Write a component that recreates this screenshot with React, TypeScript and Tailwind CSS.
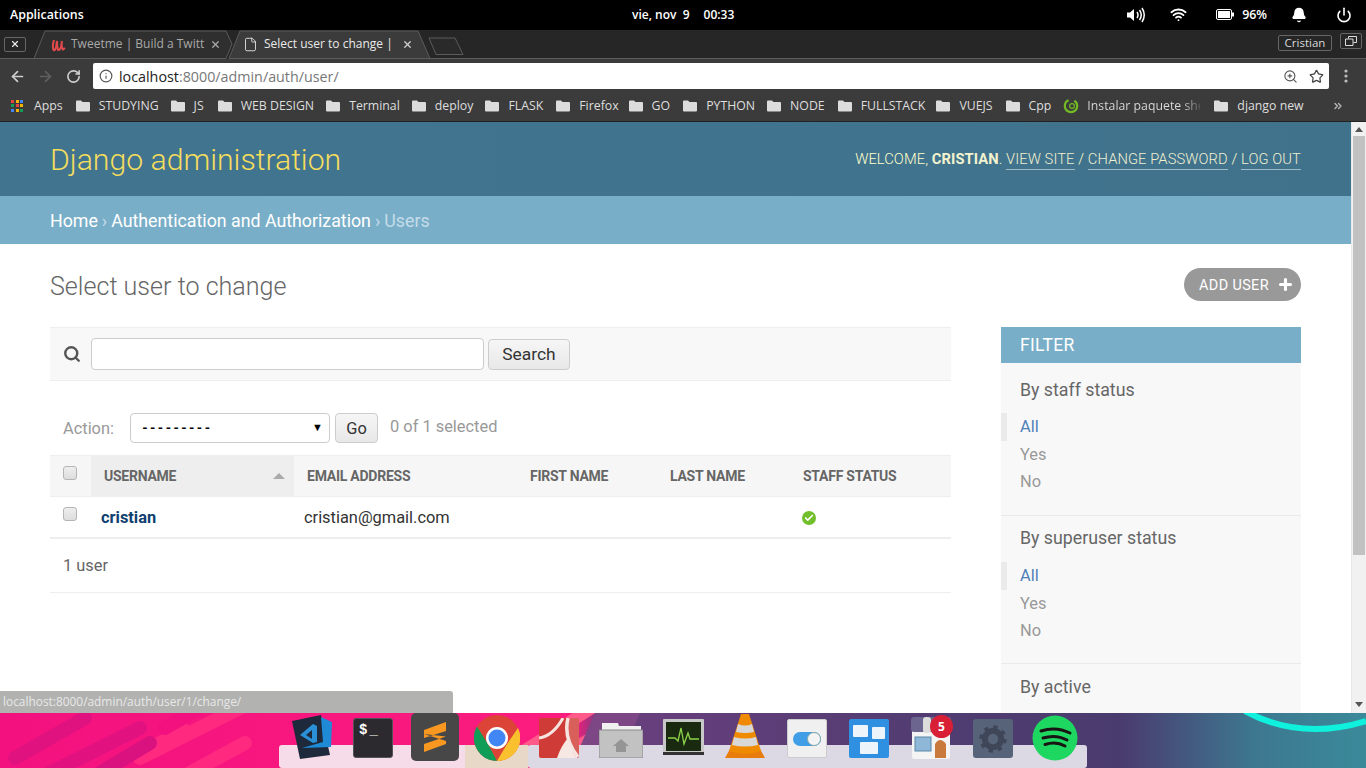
import { ArrowLeft, ArrowRight, RotateCw, Info, ZoomIn, Star, Wifi, Power, Bell, X, File, Search, Plus, Check, ChevronsRight } from "lucide-react";

const chrome = "font-['Open_Sans','Noto_Sans',sans-serif]";

function Folder() {
  return (
    <svg width="14" height="12" viewBox="0 0 14 12" className="shrink-0">
      <path d="M0 1.5 Q0 0.5 1 0.5 H5 L6.5 2 H13 Q14 2 14 3 V10.5 Q14 11.5 13 11.5 H1 Q0 11.5 0 10.5 Z" fill="#dcdcdc" />
    </svg>
  );
}

function AppsGrid() {
  const c = ["#e8453c", "#f4b400", "#4285f4", "#0f9d58", "#e8453c", "#f4b400", "#4285f4", "#f4b400", "#0f9d58"];
  return (
    <div className="grid grid-cols-3 gap-px w-[13px] h-[13px] shrink-0">
      {c.map((col, i) => (
        <span key={i} className="w-[3px] h-[3px]" style={{ background: col }} />
      ))}
    </div>
  );
}

const marks: [string, string][] = [
  ["STUDYING", "mr-[12px]"],
  ["JS", "mr-[14px]"],
  ["WEB DESIGN", "mr-[12px]"],
  ["Terminal", "mr-[12px]"],
  ["deploy", "mr-[12px]"],
  ["FLASK", "mr-[13px]"],
  ["Firefox", "mr-[10px]"],
  ["GO", "mr-[13px]"],
  ["PYTHON", "mr-[12px]"],
  ["NODE", "mr-[13px]"],
  ["FULLSTACK", "mr-[11px]"],
  ["VUEJS", "mr-[13px]"],
  ["Cpp", "mr-[12px]"],
];

function TopBar() {
  return (
    <div className={`h-[30px] bg-black text-white flex items-center relative shrink-0 text-[12.4px] font-semibold ${chrome}`}>
      <span className="ml-[10px]">Applications</span>
      <div className="absolute left-[632px] top-[6px] flex gap-[12px] whitespace-nowrap text-[12px]">
        <span className="whitespace-pre">vie, nov  9</span>
        <span className="ml-[2px]">00:33</span>
      </div>
      <div className="ml-auto flex items-center">
        <svg width="20" height="16" viewBox="0 0 20 16" className="mr-[24px]">
          <path d="M1 5.5 H4 L8 2 V14 L4 10.5 H1 Z" fill="#fff" />
          <path d="M11 5 Q13 8 11 11 M13.5 3 Q17 8 13.5 13 M16 1 Q20.5 8 16 15" stroke="#fff" strokeWidth="1.5" fill="none" />
        </svg>
        <Wifi size={17} strokeWidth={2.6} className="mr-[29px]" />
        <svg width="18" height="11" viewBox="0 0 18 11" className="mr-[8px]">
          <rect x="0.5" y="0.5" width="15" height="10" rx="1.5" stroke="#fff" fill="none" />
          <rect x="2" y="2" width="12" height="7" fill="#fff" />
          <rect x="16" y="3.5" width="2" height="4" fill="#fff" />
        </svg>
        <span className="mr-[24px]">96%</span>
        <Bell size={16} fill="#fff" strokeWidth={2} className="mr-[29px]" />
        <Power size={16} strokeWidth={2.4} className="mr-[14px]" />
      </div>
    </div>
  );
}

function TabStrip() {
  return (
    <div className={`h-[30px] bg-[#262626] relative flex items-center shrink-0 text-[12px] ${chrome}`}>
      <svg className="absolute inset-0" width="1366" height="30" viewBox="0 0 1366 30">
        <path d="M34 28.5 L45 1 H226 L232 14 L226 28.5 Z" fill="#2f2f2f" stroke="#5b5b5b" />
        <path d="M430 28.5 L418 1 H240 L229 28.5 Z" fill="#3b3b3b" stroke="#5b5b5b" />
        <path d="M436 24.5 L429 8 H455 L463 24.5 Z" fill="#2a2a2a" stroke="#5b5b5b" />
        <path d="M0 28.5 H34 M430 28.5 H1366" stroke="#5b5b5b" />
        <rect x="0" y="29" width="1366" height="1" fill="#3b3b3b" />
      </svg>
      <div className="relative ml-[4px] w-[22px] h-[15px] mb-[2px] border border-[#666] rounded-[2px] flex items-center justify-center">
        <X size={10} strokeWidth={2.6} color="#eee" />
      </div>
      <div className="relative ml-[19px] w-[26px] flex justify-center">
        <svg width="15" height="13" viewBox="0 0 15 13">
          <path d="M3 1 Q1 7 2.5 11 Q4 12 5 8 L6 2 Q6 8 7 11 Q9 11.5 10 8 L11 2 Q10 8 12 10.5 L14 9" stroke="#e04a4a" strokeWidth="2" fill="none" />
        </svg>
      </div>
      <span className="relative w-[135px] ml-[-1px] pl-[1px] whitespace-nowrap overflow-hidden text-[#a9a9a9] mb-[2px]">Tweetme | Build a Twitt</span>
      <X size={11} strokeWidth={2.8} color="#a9a9a9" className="relative ml-[5px] mb-[1px]" />
      <File size={15} strokeWidth={1.4} color="#e8e8e8" className="relative ml-[22px] mb-[1px]" />
      <span className="relative w-[126px] ml-[6px] whitespace-nowrap text-[#eaeaea] mb-[2px]">Select user to change |</span>
      <X size={11} strokeWidth={2.8} color="#cfcfcf" className="relative ml-[12px] mb-[1px]" />
      <div className="relative ml-auto mr-[34px] w-[54px] h-[16px] mb-[5px] border border-[#666] rounded-[2px] text-[11.5px] text-[#d8d8d8] flex items-center justify-center">Cristian</div>
      <div className="absolute left-[1340px] top-[3px] w-[22px] h-[16px] border border-[#666] rounded-[2px] flex items-center justify-center">
        <svg width="12" height="10" viewBox="0 0 12 10">
          <path d="M3.5 2.5 V0.5 H11.5 V6.5 H8.5 M0.5 3 H8 V9.5 H0.5 Z" stroke="#ddd" fill="none" />
        </svg>
      </div>
    </div>
  );
}

function Toolbar() {
  return (
    <div className={`h-[32px] bg-[#3b3b3b] flex items-center shrink-0 ${chrome}`}>
      <ArrowLeft size={17} strokeWidth={2.4} color="#cfcfcf" className="ml-[9px]" />
      <ArrowRight size={17} strokeWidth={2.4} color="#5f5f5f" className="ml-[11px]" />
      <RotateCw size={15} strokeWidth={2.6} color="#cfcfcf" className="ml-[12px]" />
      <div className="ml-[12px] w-[1236px] h-[26px] bg-white rounded-[2px] flex items-center">
        <Info size={14} strokeWidth={2} color="#555" className="ml-[6px]" />
        <span className="ml-[6px] pt-px text-[14.3px] text-[#222]">localhost<span className="text-[#777]">:8000/admin/auth/user/</span></span>
        <ZoomIn size={15} strokeWidth={1.8} color="#555" className="ml-auto" />
        <Star size={15} strokeWidth={2} color="#444" className="ml-[11px] mr-[5px]" />
      </div>
      <svg width="4" height="14" viewBox="0 0 4 14" className="ml-[15px]">
        <circle cx="2" cy="2" r="1.6" fill="#bdbdbd" />
        <circle cx="2" cy="7" r="1.6" fill="#bdbdbd" />
        <circle cx="2" cy="12" r="1.6" fill="#bdbdbd" />
      </svg>
    </div>
  );
}

function Bookmarks() {
  return (
    <div className={`h-[30px] pb-px bg-[#3b3b3b] border-b border-[#222] flex items-center shrink-0 text-[12.3px] text-[#dedede] whitespace-nowrap ${chrome}`}>
      <div className="ml-[11px]"><AppsGrid /></div>
      <span className="ml-[10px] mr-[13px]">Apps</span>
      {marks.map(([m, mr]) => (
        <div key={m} className={`flex items-center gap-[9px] ${mr}`}>
          <Folder />
          <span>{m}</span>
        </div>
      ))}
      <svg width="16" height="16" viewBox="0 0 16 16" className="shrink-0">
        <circle cx="8" cy="8" r="6.2" stroke="#73ba25" strokeWidth="2.2" fill="none" strokeDasharray="26 6" />
        <circle cx="9" cy="8" r="2.4" stroke="#73ba25" strokeWidth="1.2" fill="none" />
      </svg>
      <span className="ml-[8px] w-[113px] overflow-hidden text-transparent bg-clip-text bg-[linear-gradient(90deg,#dedede_85%,#555_100%)] mr-[14px]">Instalar paquete she</span>
      <div className="flex items-center gap-[9px]">
        <Folder />
        <span>django new</span>
      </div>
      <ChevronsRight size={12} strokeWidth={2.6} color="#bbb" className="ml-[28px]" />
    </div>
  );
}

function Checkbox() {
  return <span className="block w-[14px] h-[14px] rounded-[3px] border border-[#b5b5b5] bg-[linear-gradient(#eee,#ddd)]" />;
}

function FilterOptions() {
  return (
    <ul className="text-[16.4px] leading-[27.6px]">
      <li className="pl-[13px] border-l-[6px] border-[#eaeaea] text-[#4f80b8]">All</li>
      <li className="pl-[19px] text-[#999]">Yes</li>
      <li className="pl-[19px] text-[#999]">No</li>
    </ul>
  );
}

function Page() {
  return (
    <div className="flex-1 min-w-0 font-['Roboto',sans-serif]">
      <header className="h-[74px] pt-[2px] bg-[linear-gradient(90deg,#41758f,#40728c)] flex items-center justify-between px-[50px]">
        <h1 className="text-[30.2px] font-light text-[#f5dd5d] leading-none">Django administration</h1>
        <div className="-mt-[2px] text-[14.7px] text-[#ffffcc] uppercase tracking-[0.1px] font-light">
          Welcome, <b className="font-bold text-[#f3f3cf]">Cristian</b>.{" "}
          <span className="border-b border-[#ffffff80] pb-[1px] text-[#f0f0d0]">View site</span> /{" "}
          <span className="border-b border-[#ffffff80] pb-[1px] text-[#f0f0d0]">Change password</span> /{" "}
          <span className="border-b border-[#ffffff80] pb-[1px] text-[#f0f0d0]">Log out</span>
        </div>
      </header>
      <div className="h-[48px] pt-[2px] bg-[#79aec8] flex items-center px-[50px] text-[17.8px] text-white font-normal">
        Home<span className="text-[#c4dce8] mx-[4px]">›</span>Authentication and Authorization<span className="text-[#c4dce8] mx-[4px]">›</span><span className="text-[#c4dce8]">Users</span>
      </div>
      <div className="px-[50px] pt-[24px]">
        <div className="flex items-start justify-between h-[59px]">
          <h2 className="mt-[1px] text-[25.1px] font-light text-[#666] leading-[36px]">Select user to change</h2>
          <div className="h-[33px] w-[117px] rounded-full bg-[#999] text-white text-[14.4px] tracking-[0.4px] flex items-center pl-[15px]">
            <span className="mt-[2px]">ADD USER</span>
            <Plus size={17} strokeWidth={4.4} className="ml-[8px]" />
          </div>
        </div>
        <div className="flex items-start gap-[50px]">
          <div className="w-[901px]">
            <div className="h-[54px] bg-[#f8f8f8] border-y border-[#eee] flex items-center pl-[13px]">
              <Search size={18} strokeWidth={3.2} color="#555" />
              <div className="ml-[10px] w-[393px] h-[32px] bg-white border border-[#ccc] rounded-[4px]" />
              <div className="ml-[4px] w-[82px] h-[31px] border border-[#ccc] rounded-[4px] bg-[linear-gradient(#f6f6f6,#e8e8e8)] text-[17.4px] text-[#333] flex items-center justify-center">Search</div>
            </div>
            <div className="h-[74px] flex items-center pt-[20px] pl-[13px] text-[16.4px] text-[#999]">
              <span className="w-[67px] pt-[2px]">Action:</span>
              <div className="w-[200px] h-[30px] bg-white border border-[#ccc] rounded-[4px] flex items-center justify-between pl-[10px] pr-[6px] text-black">
                <span className="text-[13px] font-bold font-['Liberation_Mono',monospace] leading-none">---------</span>
                <span className="text-[11px]">▼</span>
              </div>
              <div className="ml-[5px] w-[43px] h-[30px] pt-[2px] border border-[#ccc] rounded-[4px] bg-[linear-gradient(#f6f6f6,#e8e8e8)] text-[#333] flex items-center justify-center">Go</div>
              <span className="ml-[12px] -mt-[1px]">0 of 1 selected</span>
            </div>
            <div className="grid grid-cols-[41px_203px_223px_140px_134px_1fr] h-[42px] bg-[#f6f6f6] border-y border-[#eee] text-[14px] tracking-[-0.25px] font-bold text-[#666] items-center">
              <div className="pl-[13px] -mt-[6px]"><Checkbox /></div>
              <div className="h-full bg-[#eeeeee] flex items-center justify-between pl-[13px] pr-[9px]">
                USERNAME
                <span className="w-0 h-0 border-x-[6px] border-x-transparent border-b-[6px] border-b-[#aaa]" />
              </div>
              <div className="pl-[13px]">EMAIL ADDRESS</div>
              <div className="pl-[13px]">FIRST NAME</div>
              <div className="pl-[13px]">LAST NAME</div>
              <div className="pl-[12px]">STAFF STATUS</div>
            </div>
            <div className="grid grid-cols-[41px_203px_223px_140px_134px_1fr] h-[42px] border-b-2 border-[#eee] items-center text-[16.4px] text-[#333]">
              <div className="pl-[13px] -mt-[6px]"><Checkbox /></div>
              <div className="pl-[10px] pt-[2px] font-bold text-[#0f3f70]">cristian</div>
              <div className="pl-[10px] pt-[2px]">cristian@gmail.com</div>
              <div />
              <div />
              <div className="pl-[11px] pt-[2px]">
                <span className="w-[14px] h-[14px] rounded-full bg-[#70bf2b] flex items-center justify-center">
                  <Check size={10} strokeWidth={4} color="#fff" />
                </span>
              </div>
            </div>
            <div className="h-[54px] pt-[2px] border-b border-[#eee] flex items-center pl-[13px] text-[16.4px] text-[#666]">1 user</div>
          </div>
          <aside className="w-[300px] bg-[#f8f8f8] h-[400px] overflow-hidden">
            <h2 className="h-[36px] bg-[#79aec8] text-white text-[17.5px] tracking-[0.3px] flex items-center pl-[19px]">FILTER</h2>
            <div className="h-[153px] pt-[14px] border-b border-[#eaeaea]">
              <h3 className="pl-[19px] mb-[10px] text-[17.75px] leading-[26px] text-[#666]">By staff status</h3>
              <FilterOptions />
            </div>
            <div className="h-[148px] pt-[9px] border-b border-[#eaeaea]">
              <h3 className="pl-[19px] mb-[11px] text-[17.75px] leading-[26px] text-[#666]">By superuser status</h3>
              <FilterOptions />
            </div>
            <div className="pt-[10px]">
              <h3 className="pl-[19px] text-[17.75px] leading-[26px] text-[#666]">By active</h3>
            </div>
          </aside>
        </div>
      </div>
    </div>
  );
}

function Scrollbar() {
  return (
    <div className="w-[15px] bg-[#f1f1f1] flex flex-col items-center shrink-0 border-l border-[#e8e8e8]">
      <span className="mt-[5px] w-0 h-0 border-x-[4px] border-x-transparent border-b-[5px] border-b-[#555]" />
      <div className="mt-[4px] w-[12px] h-[419px] bg-[#c1c1c1]" />
      <span className="mt-[147px] w-0 h-0 border-x-[4px] border-x-transparent border-t-[5px] border-t-[#555]" />
    </div>
  );
}

function Wallpaper() {
  return (
    <svg className="absolute inset-0" width="1366" height="55" viewBox="0 0 1366 55">
      <defs>
        <linearGradient id="wp" x1="0" y1="0" x2="1366" y2="0" gradientUnits="userSpaceOnUse">
          <stop offset="0" stopColor="#f3117f" />
          <stop offset="0.42" stopColor="#fb1d7e" />
          <stop offset="0.44" stopColor="#6a3f7e" />
          <stop offset="0.7" stopColor="#4f3c70" />
          <stop offset="0.82" stopColor="#4a3b6e" />
          <stop offset="0.92" stopColor="#3d7890" />
          <stop offset="1" stopColor="#3a8a9a" />
        </linearGradient>
      </defs>
      <rect width="1366" height="55" fill="url(#wp)" />
      <g strokeLinecap="round" strokeWidth="14">
        <path d="M15 45 L85 5" stroke="#df1280" />
        <path d="M50 60 L140 15" stroke="#e11280" />
        <path d="M140 40 L185 18" stroke="#ff2a80" />
        <path d="M140 45 L250 -10" stroke="#ff2a80" />
        <path d="M190 60 L245 30" stroke="#ff2a80" />
        <path d="M200 -5 L165 15" stroke="#f3117f" />
        <path d="M100 60 L150 30" stroke="#d91280" />
      </g>
      <path d="M520 40 L600 -10 M540 55 L600 20" stroke="#ff5a8a" strokeWidth="12" />
      <path d="M575 45 L595 0 L640 0 L620 45 Z" fill="#7d4684" />
      <path d="M1245 -2 Q1300 28 1366 8" stroke="#0ff0dd" strokeWidth="6" fill="none" />
      <rect x="279" y="32" width="250" height="23" rx="3" fill="#f6dbe8" />
      <rect x="465" y="32" width="63" height="23" fill="#e8d8c8" />
      <rect x="528" y="32" width="559" height="23" rx="3" fill="#dcd8e4" />
    </svg>
  );
}

function DockIcons() {
  return (
    <div className="relative flex items-start pl-[280px] h-full">
      <div className="w-[62px] flex justify-center mt-[2px]">
        <svg width="42" height="44" viewBox="0 0 42 44">
          <path d="M2 6 L31 0 L40 40 L10 44 Z" fill="#1e2a3c" />
          <path d="M31 2 L42 7 L41 32 L12 33 L33 27 Z" fill="#1f8ad6" />
          <path d="M10 20 L23 9 L27 11 V27 L23 28 L10 20 M16 20 L22 24 V15 Z" fill="#2a90d8" fillRule="evenodd" />
        </svg>
      </div>
      <div className="w-[62px] flex justify-center mt-[5px]">
        <div className="w-[40px] h-[40px] rounded-[3px] bg-[#2c2a2e] border border-[#55535a] text-white text-[14px] font-bold pl-[5px] pt-[4px] leading-none tracking-[2px] font-['Liberation_Mono',monospace]">$_</div>
      </div>
      <div className="w-[62px] flex justify-center">
        <div className="w-[48px] h-[48px] rounded-[5px] bg-[#474747] flex items-center justify-center">
          <svg width="26" height="32" viewBox="0 0 26 32">
            <path d="M24 1 V10 L2 17 V9 Z M2 13 L24 20 V23 L2 31 V23 L24 15.5 Z" fill="#f89820" />
          </svg>
        </div>
      </div>
      <div className="w-[62px] flex justify-center mt-[2px]">
        <svg width="46" height="46" viewBox="0 0 46 46">
          <circle cx="23" cy="23" r="23" fill="#db4437" />
          <path d="M23 46 A23 23 0 0 1 3 11.5 L15 31 Z" fill="#0f9d58" />
          <path d="M23 46 L33 29 L44 13 A23 23 0 0 1 23 46 Z" fill="#fbc02d" />
          <circle cx="23" cy="23" r="11" fill="#fff" />
          <circle cx="23" cy="23" r="8.5" fill="#4285f4" />
        </svg>
      </div>
      <div className="w-[62px] flex justify-center mt-[5px]">
        <svg width="40" height="40" viewBox="0 0 40 40">
          <rect width="40" height="40" rx="2" fill="#cf3c38" />
          <path d="M29 0 H38 Q40 0 40 2 V38 Q24 22 29 0 Z" fill="#d9605a" />
          <path d="M0 20 Q14 18 24 0" stroke="#f7e4e0" strokeWidth="3" fill="none" />
          <path d="M29 0 Q24 20 39 39" stroke="#f7e4e0" strokeWidth="3.5" fill="none" />
          <path d="M18 40 Q22 28 29 20 Q31 32 38 40 Z" fill="#f8e8e4" />
        </svg>
      </div>
      <div className="w-[62px] flex justify-center mt-[8px]">
        <svg width="44" height="37" viewBox="0 0 44 37">
          <path d="M3 5 V2 H19 L20 5 H42 V10 H3 Z" fill="#f0f0f0" />
          <path d="M0 9 H44 V37 H0 Z" fill="#c2c2c2" stroke="#8a8a8a" />
          <path d="M22 18 L30 25 H27 V31 H17 V25 H14 Z" fill="#959595" />
        </svg>
      </div>
      <div className="w-[62px] flex justify-center mt-[6px]">
        <svg width="41" height="36" viewBox="0 0 41 36">
          <rect width="41" height="36" rx="1" fill="#c8c8c8" />
          <rect x="3" y="3" width="35" height="29" fill="#1a2a10" />
          <rect x="0" y="33" width="41" height="3" fill="#333" />
          <path d="M5 19 H12 L15 22 L18 9 L21 25 L25 14 L27 20 H36" stroke="#8dd44a" strokeWidth="1.3" fill="none" />
        </svg>
      </div>
      <div className="w-[62px] flex justify-center">
        <svg width="40" height="46" viewBox="0 0 40 46">
          <path d="M0 45 L5 36 H35 L40 45 Z" fill="#e87d0d" />
          <path d="M16 1 H24 L36 38 Q20 44 4 38 Z" fill="#f08a00" />
          <path d="M13 11 Q20 14 27 11 L29 19 Q20 21 11 19 Z M9 24 Q20 27 31 24 L33 32 Q20 35 7 32 Z" fill="#d8d8d8" />
        </svg>
      </div>
      <div className="w-[62px] flex justify-center mt-[6px]">
        <div className="w-[40px] h-[39px] bg-[#f0f0f0] rounded-[2px] border border-[#ccc] flex items-center justify-center">
          <div className="w-[28px] h-[14px] rounded-full bg-[#3f9ee6] flex justify-end">
            <span className="w-[14px] h-[14px] rounded-full bg-[#f4f4f4] border border-[#8aa]" />
          </div>
        </div>
      </div>
      <div className="w-[62px] flex justify-center mt-[6px]">
        <svg width="40" height="39" viewBox="0 0 40 39">
          <rect width="40" height="39" rx="2" fill="#2f8fe0" />
          <rect x="4" y="6" width="15" height="12" rx="1" fill="#edf5fb" />
          <rect x="23" y="8" width="13" height="12" rx="1" fill="#edf5fb" />
          <rect x="11" y="23" width="18" height="12" rx="1" fill="#edf5fb" />
        </svg>
      </div>
      <div className="relative w-[62px] flex justify-center mt-[4px]">
        <svg width="40" height="42" viewBox="0 0 40 42">
          <rect x="1" y="10" width="38" height="32" rx="2" fill="#f4f4f4" />
          <rect x="0" y="0" width="40" height="15" rx="3" fill="#6c6590" />
          <rect x="12" y="0" width="8" height="16" rx="3" fill="#dcdcdc" />
          <rect x="4" y="20" width="16" height="14" fill="#8fb8d8" stroke="#5b87a8" />
          <path d="M24 41 V27 Q29 19 35 27 V41 Z" fill="#c9793c" />
        </svg>
        <span className="absolute left-[30px] top-[-2px] w-[23px] h-[23px] rounded-full bg-[#d81f36] text-white text-[12px] font-bold font-['Open_Sans',sans-serif] flex items-center justify-center">5</span>
      </div>
      <div className="w-[62px] flex justify-center mt-[6px]">
        <div className="w-[40px] h-[39px] rounded-[3px] bg-[#566379] flex items-center justify-center">
          <svg width="28" height="28" viewBox="0 0 24 24">
            <circle cx="12" cy="12" r="7" fill="none" stroke="#3e4658" strokeWidth="5" />
            <circle cx="12" cy="12" r="10" fill="none" stroke="#3e4658" strokeWidth="3.5" strokeDasharray="3.5 4.35" />
          </svg>
        </div>
      </div>
      <div className="w-[62px] flex justify-center mt-[2px]">
        <svg width="46" height="46" viewBox="0 0 46 46">
          <circle cx="23" cy="23" r="22.5" fill="#1ed760" />
          <path d="M9 16 Q24 11 38 18 M11 23 Q24 19 35 25 M13 29.5 Q24 26 33 31" stroke="#191414" strokeWidth="3" strokeLinecap="round" fill="none" />
        </svg>
      </div>
    </div>
  );
}

export default function App() {
  return (
    <div className="relative w-[1366px] h-[768px] overflow-hidden flex flex-col bg-white">
      <TopBar />
      <TabStrip />
      <Toolbar />
      <Bookmarks />
      <div className="flex-1 flex min-h-0 overflow-hidden">
        <Page />
        <Scrollbar />
      </div>
      <div className={`absolute left-0 top-[691px] w-[453px] h-[22px] bg-[#b2b2b0] rounded-tr-[3px] text-[11.9px] text-[#e8e8e8] pl-[3px] leading-[20px] ${chrome}`}>
        localhost:8000/admin/auth/user/1/change/
      </div>
      <div className="absolute left-0 bottom-0 w-[1366px] h-[55px]">
        <Wallpaper />
        <DockIcons />
      </div>
    </div>
  );
}
